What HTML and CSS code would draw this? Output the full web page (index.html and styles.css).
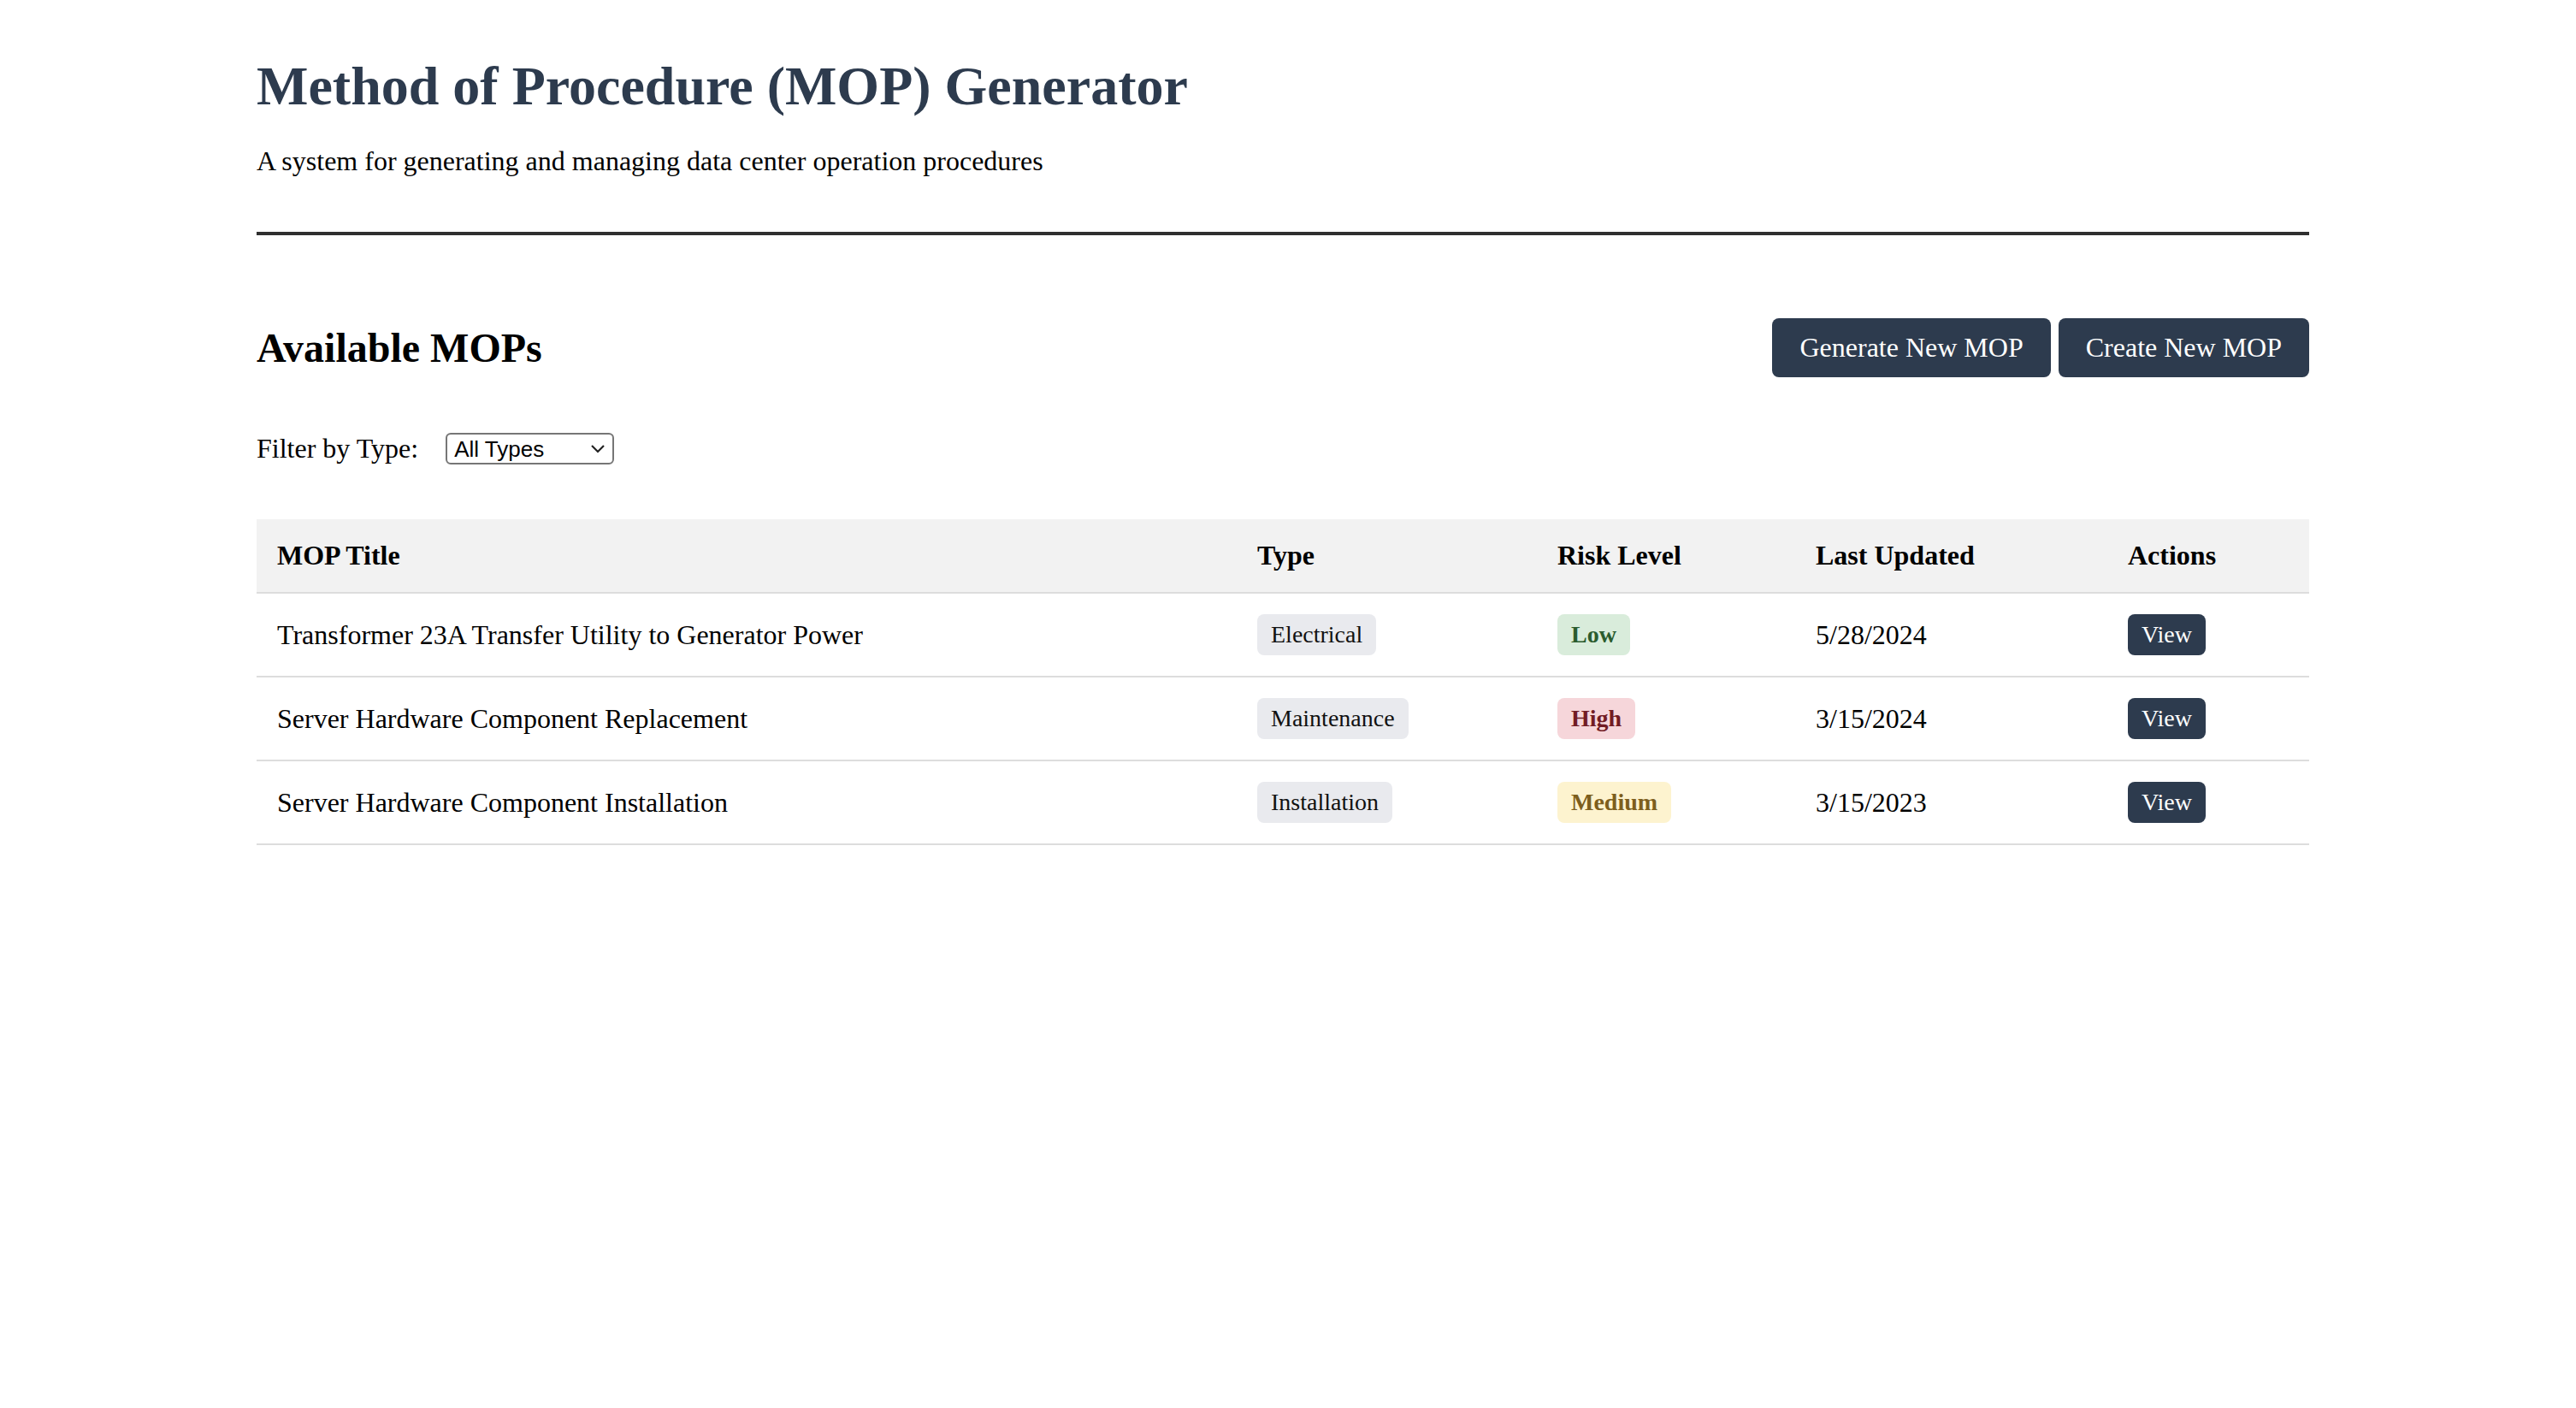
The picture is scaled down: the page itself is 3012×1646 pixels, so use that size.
FILE: index.html
```html
<!DOCTYPE html>
<html lang="en">
<head>
<meta charset="utf-8">
<title>Method of Procedure (MOP) Generator</title>
<link rel="stylesheet" href="styles.css">
</head>
<body>
<div class="page">
  <header class="site-header">
    <h1 class="title">Method of Procedure (MOP) Generator</h1>
    <p class="subtitle">A system for generating and managing data center operation procedures</p>
  </header>

  <section class="mops">
    <div class="section-head">
      <h2 class="section-title">Available MOPs</h2>
      <div class="actions">
        <button class="btn">Generate New MOP</button>
        <button class="btn">Create New MOP</button>
      </div>
    </div>

    <div class="filter">
      <label class="filter-label" for="type">Filter by Type:</label>
      <div class="select-wrap">
        <select id="type" class="select">
          <option>All Types</option>
          <option>Electrical</option>
          <option>Maintenance</option>
          <option>Installation</option>
        </select>
        <svg class="chev" width="18" height="12" viewBox="0 0 18 12"><path d="M2 2 L9 9 L16 2" fill="none" stroke="#222" stroke-width="2.2"/></svg>
      </div>
    </div>

    <table class="mop-table">
      <colgroup>
        <col class="c-title"><col class="c-type"><col class="c-risk"><col class="c-date"><col class="c-act">
      </colgroup>
      <thead>
        <tr><th>MOP Title</th><th>Type</th><th>Risk Level</th><th>Last Updated</th><th>Actions</th></tr>
      </thead>
      <tbody>
        <tr>
          <td>Transformer 23A Transfer Utility to Generator Power</td>
          <td><span class="badge type">Electrical</span></td>
          <td><span class="badge risk low">Low</span></td>
          <td>5/28/2024</td>
          <td><button class="view">View</button></td>
        </tr>
        <tr>
          <td>Server Hardware Component Replacement</td>
          <td><span class="badge type">Maintenance</span></td>
          <td><span class="badge risk high">High</span></td>
          <td>3/15/2024</td>
          <td><button class="view">View</button></td>
        </tr>
        <tr>
          <td>Server Hardware Component Installation</td>
          <td><span class="badge type">Installation</span></td>
          <td><span class="badge risk medium">Medium</span></td>
          <td>3/15/2023</td>
          <td><button class="view">View</button></td>
        </tr>
      </tbody>
    </table>
  </section>
</div>
</body>
</html>
```

FILE: styles.css
```css
html, body {
  margin: 0;
  background: #ffffff;
}
body {
  font-family: "Liberation Serif", "Times New Roman", serif;
  font-size: 32px;
  color: #000;
  padding: 0 12px 0 0;
}
.page {
  max-width: 2400px;
  margin: 0 auto;
}
.site-header {
  padding-top: 64px;
  padding-bottom: 64px;
  border-bottom: 4px solid #2f2f2f;
}
.title {
  margin: 0 0 32px;
  font-size: 64px;
  font-weight: bold;
  color: #2d3b4e;
}
.subtitle {
  margin: 0;
  font-size: 32px;
}
.mops {
  padding-top: 97px;
}
.section-head {
  display: flex;
  align-items: center;
  justify-content: space-between;
}
.section-title {
  margin: 0;
  font-size: 48px;
  font-weight: bold;
}
.actions {
  display: flex;
  gap: 9px;
}
.btn {
  font-family: "Liberation Serif", "Times New Roman", serif;
  font-size: 32px;
  color: #fff;
  background: #2d3b4e;
  border: none;
  border-radius: 8px;
  padding: 16px 32px;
  line-height: normal;
  cursor: pointer;
}
.filter {
  display: flex;
  align-items: center;
  margin-top: 65px;
}
.filter-label {
  margin-right: 32px;
}
.select-wrap {
  position: relative;
  display: inline-block;
}
.select {
  appearance: none;
  -webkit-appearance: none;
  width: 197px;
  height: 37px;
  box-sizing: border-box;
  border: 2px solid #767676;
  border-radius: 6px;
  background: #fff;
  font-family: "Liberation Sans", Arial, sans-serif;
  font-size: 26px;
  color: #000;
  padding: 0 0 0 8px;
  display: block;
}
.chev {
  position: absolute;
  right: 10px;
  top: 13px;
  pointer-events: none;
}
.mop-table {
  width: 100%;
  margin-top: 64px;
  border-collapse: collapse;
  table-layout: fixed;
}
.c-title { width: 1146px; }
.c-type { width: 351px; }
.c-risk { width: 302px; }
.c-date { width: 365px; }
.c-act { width: 236px; }
.mop-table th {
  background: #f2f2f2;
  text-align: left;
  font-weight: bold;
  padding: 24px;
  border-bottom: 2px solid #dddddd;
}
.mop-table td {
  padding: 24px;
  border-bottom: 2px solid #dddddd;
  vertical-align: middle;
}
.badge {
  display: inline-block;
  font-size: 28px;
  padding: 8px 16px;
  border-radius: 8px;
  vertical-align: middle;
}
.badge.type {
  background: #e9eaee;
  color: #111;
}
.badge.risk {
  font-weight: bold;
}
.badge.low {
  background: #d9ecdb;
  color: #2b5c2e;
}
.badge.high {
  background: #f6d6da;
  color: #721c24;
}
.badge.medium {
  background: #fdf3cf;
  color: #7d5e1c;
}
.view {
  font-family: "Liberation Serif", "Times New Roman", serif;
  font-size: 28px;
  color: #fff;
  background: #2d3b4e;
  border: none;
  border-radius: 8px;
  padding: 8px 16px;
  line-height: normal;
  vertical-align: middle;
  cursor: pointer;
}
```
